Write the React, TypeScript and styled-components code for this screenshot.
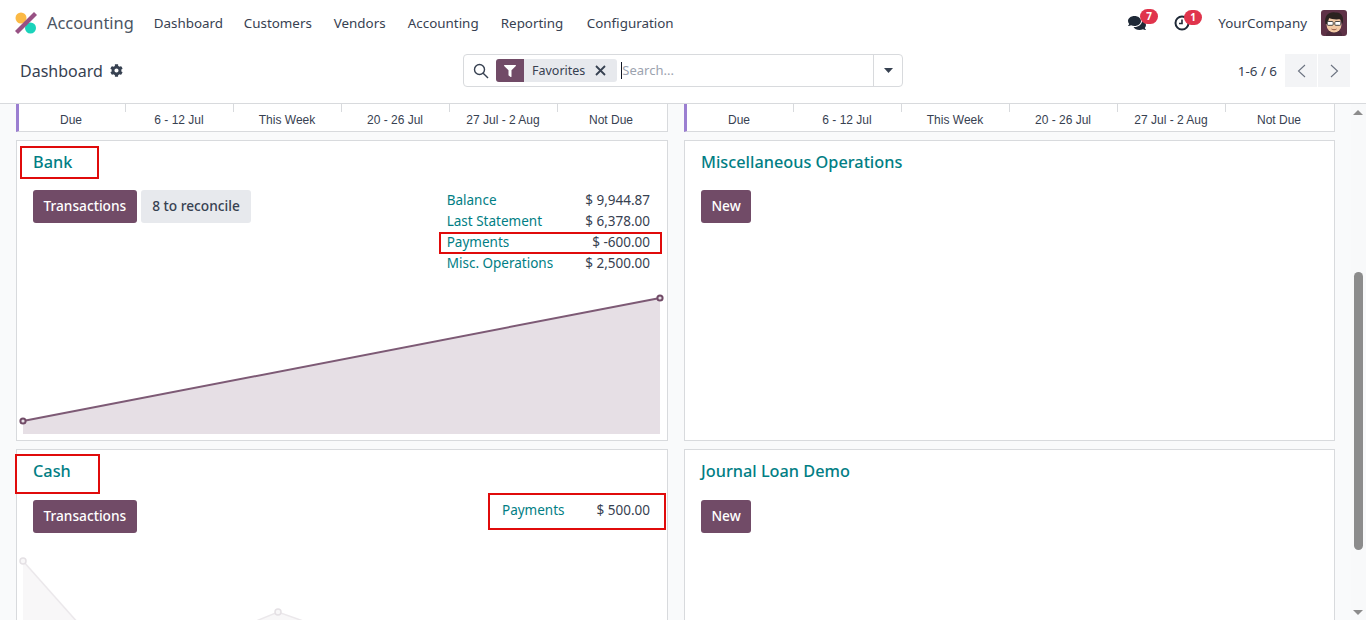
import React from 'react';
import styled, { createGlobalStyle } from 'styled-components';
import { FaCog, FaComments, FaFilter } from 'react-icons/fa';

const GlobalStyle = createGlobalStyle`
  html, body {
    margin: 0;
    height: 100%;
    overflow: hidden;
    background: #fff;
    font-family: "Noto Sans", "Open Sans", sans-serif;
    color: #374151;
  }
  * {
    box-sizing: border-box;
  }
`;

const Page = styled.div`
  display: flex;
  flex-direction: column;
  height: 620px;
  overflow: hidden;
`;

const NavBar = styled.header`
  display: flex;
  align-items: center;
  height: 46px;
  padding: 0 19px 0 15px;
  flex: none;
`;

const AppName = styled.span`
  font-size: 16.4px;
  margin: 0 20px 0 10px;
  padding-bottom: 2px;
  color: #4b5563;
`;

const MenuItem = styled.span<{ $width: number }>`
  width: ${p => p.$width}px;
  font-size: 13.4px;
`;

const NavRight = styled.div`
  display: flex;
  align-items: center;
  margin-left: auto;
`;

const Systray = styled.span<{ $mr: number }>`
  position: relative;
  display: flex;
  margin-right: ${p => p.$mr}px;
`;

const Badge = styled.span`
  position: absolute;
  top: -5px;
  right: -12px;
  width: 18px;
  height: 15px;
  border-radius: 8px;
  background: #e0344c;
  color: #fff;
  font-size: 10px;
  font-weight: 700;
  line-height: 15px;
  text-align: center;
`;

const CompanyName = styled.span`
  font-size: 13.4px;
  margin-right: 14px;
`;

const ControlPanel = styled.div`
  display: grid;
  grid-template-columns: 443px 440px 1fr;
  align-items: center;
  height: 58px;
  padding: 0 16px 8px 20px;
  border-bottom: 1px solid #d8dadd;
  flex: none;
`;

const PageTitle = styled.div`
  display: flex;
  align-items: center;
  gap: 7px;
  font-size: 16px;
`;

const SearchBox = styled.div`
  display: flex;
  align-items: center;
  height: 33px;
  border: 1px solid #d8dadd;
  border-radius: 4px;
  padding-left: 9px;
`;

const Facet = styled.div`
  display: flex;
  align-items: stretch;
  height: 23px;
  margin-left: 7px;
  border-radius: 3px;
  background: #e7e9ed;
  font-size: 12.5px;
`;

const FacetIcon = styled.span`
  display: flex;
  align-items: center;
  justify-content: center;
  width: 28px;
  background: #714b67;
  border-radius: 3px 0 0 3px;
`;

const FacetLabel = styled.span`
  display: flex;
  align-items: center;
  gap: 10px;
  padding: 0 11px 0 8px;
`;

const SearchInput = styled.span`
  flex: 1;
  height: 17px;
  margin-left: 4px;
  border-left: 1px solid #111827;
  color: #9ca3af;
  font-size: 13px;
  line-height: 16px;
`;

const SearchCaret = styled.span`
  display: flex;
  align-items: center;
  justify-content: center;
  width: 29px;
  height: 100%;
  border-left: 1px solid #d8dadd;
`;

const Pager = styled.div`
  display: flex;
  align-items: center;
  justify-content: flex-end;
  gap: 8px;
  font-size: 13.4px;
`;

const PagerButtons = styled.div`
  display: flex;
  gap: 1px;
`;

const PagerButton = styled.span`
  display: flex;
  align-items: center;
  justify-content: center;
  width: 32px;
  height: 33px;
  background: #f3f4f6;
`;

const Body = styled.div`
  flex: 1;
  display: flex;
  min-height: 0;
  background: #f9fafb;
`;

const Board = styled.main`
  flex: 1;
  display: grid;
  grid-template-columns: 652px 651px;
  grid-auto-rows: min-content;
  column-gap: 16px;
  row-gap: 8px;
  padding-left: 16px;
  overflow: hidden;
`;

const GraphStub = styled.div`
  display: grid;
  grid-template-columns: repeat(6, 108px);
  height: 28px;
  background: #fff;
  border-left: 3px solid #9b7fd1;
  border-right: 1px solid #d8dadd;
  border-bottom: 1px solid #d8dadd;
`;

const StubColumn = styled.div<{ $tick: boolean }>`
  position: relative;
  padding: 9px 4px 0 0;
  font-family: "Liberation Sans", Arial, sans-serif;
  font-size: 12px;
  line-height: 14px;
  color: #374151;
  text-align: center;
  white-space: nowrap;
  &::before {
    content: '';
    display: ${p => (p.$tick ? 'block' : 'none')};
    position: absolute;
    left: -2px;
    top: 0;
    width: 1px;
    height: 8px;
    background: #d8dadd;
  }
`;

const Card = styled.section<{ $height: number }>`
  position: relative;
  display: flex;
  flex-direction: column;
  height: ${p => p.$height}px;
  background: #fff;
  border: 1px solid #d8dadd;
`;

const CardTitle = styled.h3<{ $height: number }>`
  margin: 0;
  padding: 9px 16px 0;
  height: ${p => p.$height}px;
  color: #017e84;
  font-size: 16.3px;
  font-weight: 500;
  line-height: 24px;
`;

const CardRow = styled.div`
  display: flex;
  justify-content: space-between;
  padding: 0 17px 0 16px;
`;

const ButtonGroup = styled.div`
  display: flex;
  gap: 4px;
`;

const Button = styled.span<{ $primary?: boolean }>`
  display: flex;
  align-items: center;
  height: 33px;
  padding: 0 ${p => (p.$primary ? '10.5px' : '11.5px')} 2px;
  border-radius: 3px;
  font-size: 13.7px;
  font-weight: 500;
  background: ${p => (p.$primary ? '#714b67' : '#e7e9ed')};
  color: ${p => (p.$primary ? '#fff' : '#374151')};
`;

const Stats = styled.div`
  display: grid;
  grid-template-columns: auto auto;
  grid-auto-rows: 21px;
  column-gap: 32px;
  align-items: center;
  margin-top: -1px;
  font-size: 13.5px;
`;

const StatLabel = styled.span`
  color: #017e84;
`;

const StatValue = styled.span`
  text-align: right;
`;

const Chart = styled.svg`
  display: block;
  flex: none;
`;

const Highlight = styled.span<{ $x: number; $y: number; $w: number; $h: number }>`
  position: absolute;
  left: ${p => p.$x}px;
  top: ${p => p.$y}px;
  width: ${p => p.$w}px;
  height: ${p => p.$h}px;
  border: 2px solid #e00b0b;
  pointer-events: none;
`;

const ScrollBar = styled.aside`
  display: flex;
  flex-direction: column;
  align-items: center;
  width: 15px;
  flex: none;
  padding: 6px 1px 5px 0;
  background: #f8f9fa;
`;

const ScrollThumb = styled.span`
  width: 9px;
  height: 278px;
  margin: 157px 0 auto;
  border-radius: 5px;
  background: #8c8c8c;
`;

const ArrowUp = styled.span`
  width: 0;
  height: 0;
  border-left: 5px solid transparent;
  border-right: 5px solid transparent;
  border-bottom: 5px solid #8c8c8c;
`;

const ArrowDown = styled(ArrowUp)`
  border-bottom: none;
  border-top: 5px solid #8c8c8c;
`;

const Logo = () => (
  <svg width="22" height="22" viewBox="0 0 22 22">
    <circle cx="6" cy="6" r="5.5" fill="#fbb945" />
    <circle cx="15.5" cy="16" r="5.5" fill="#1ad3bb" />
    <path d="M19 0 L22 3 L3 22 L0 19 Z" fill="#985184" />
  </svg>
);

const ClockIcon = () => (
  <svg width="16" height="16" viewBox="0 0 16 16" fill="none" stroke="#1f2937" strokeWidth="2">
    <circle cx="8" cy="8" r="6.5" />
    <path d="M8 4.5 V8.5 H5" strokeWidth="1.6" />
  </svg>
);

const Avatar = () => (
  <svg width="26" height="26" viewBox="0 0 26 26">
    <rect width="26" height="26" rx="3" fill="#5e3146" />
    <path d="M5 26 C5 21 9 20 13 20 C18 20 21 21 21 26 Z" fill="#4b2b3b" />
    <ellipse cx="13" cy="14.5" rx="7.5" ry="8" fill="#f2c9a4" />
    <path d="M4.5 14 C2.5 5 9 1.5 14 2.5 C20.5 1.5 23.5 7 21.5 14 L19.5 9 C15 10 10 9 8 8 L6.5 14 Z" fill="#2b2320" />
    <rect x="6.2" y="11.5" width="6" height="3.8" rx="1" fill="#fff" stroke="#333" strokeWidth=".9" />
    <rect x="13.8" y="11.5" width="6" height="3.8" rx="1" fill="#fff" stroke="#333" strokeWidth=".9" />
    <path d="M10.5 19 C12 20 14 20 15.5 19" stroke="#8a4b3b" strokeWidth=".9" fill="none" />
  </svg>
);

const columns = ['Due', '6 - 12 Jul', 'This Week', '20 - 26 Jul', '27 Jul - 2 Aug', 'Not Due'];
const menu: [string, number][] = [
  ['Dashboard', 90],
  ['Customers', 90],
  ['Vendors', 74],
  ['Accounting', 93],
  ['Reporting', 86],
  ['Configuration', 100],
];

const Stub = () => (
  <GraphStub>
    {columns.map((c, i) => (
      <StubColumn key={c} $tick={i > 0}>{c}</StubColumn>
    ))}
  </GraphStub>
);

export default function App() {
  return (
    <Page>
      <GlobalStyle />
      <NavBar>
        <Logo />
        <AppName>Accounting</AppName>
        {menu.map(([label, width]) => (
          <MenuItem key={label} $width={width}>{label}</MenuItem>
        ))}
        <NavRight>
          <Systray $mr={28}>
            <FaComments size={18} color="#1f2937" />
            <Badge>7</Badge>
          </Systray>
          <Systray $mr={28}>
            <ClockIcon />
            <Badge>1</Badge>
          </Systray>
          <CompanyName>YourCompany</CompanyName>
          <Avatar />
        </NavRight>
      </NavBar>
      <ControlPanel>
        <PageTitle>
          Dashboard
          <FaCog size={13} color="#374151" />
        </PageTitle>
        <SearchBox>
          <svg width="16" height="16" viewBox="0 0 16 16" fill="none" stroke="#374151" strokeWidth="1.4">
            <circle cx="6.5" cy="6.5" r="5" />
            <path d="M10.2 10.2 L15 15" />
          </svg>
          <Facet>
            <FacetIcon>
              <FaFilter size={12} color="#fff" />
            </FacetIcon>
            <FacetLabel>
              Favorites
              <svg width="11" height="11" viewBox="0 0 11 11" stroke="#374151" strokeWidth="1.8">
                <path d="M1 1 L10 10 M10 1 L1 10" />
              </svg>
            </FacetLabel>
          </Facet>
          <SearchInput>Search...</SearchInput>
          <SearchCaret>
            <svg width="9" height="5" viewBox="0 0 9 5" fill="#374151">
              <path d="M0 0 H9 L4.5 5 Z" />
            </svg>
          </SearchCaret>
        </SearchBox>
        <Pager>
          1-6 / 6
          <PagerButtons>
            <PagerButton>
              <svg width="9" height="14" viewBox="0 0 9 14" fill="none" stroke="#6b7280" strokeWidth="1.1">
                <path d="M8 1 L1.5 7 L8 13" />
              </svg>
            </PagerButton>
            <PagerButton>
              <svg width="9" height="14" viewBox="0 0 9 14" fill="none" stroke="#6b7280" strokeWidth="1.1">
                <path d="M1 1 L7.5 7 L1 13" />
              </svg>
            </PagerButton>
          </PagerButtons>
        </Pager>
      </ControlPanel>
      <Body>
        <Board>
          <Stub />
          <Stub />
          <Card $height={301}>
            <CardTitle $height={49}>Bank</CardTitle>
            <CardRow>
              <ButtonGroup>
                <Button $primary>Transactions</Button>
                <Button>8 to reconcile</Button>
              </ButtonGroup>
              <Stats>
                <StatLabel>Balance</StatLabel>
                <StatValue>$ 9,944.87</StatValue>
                <StatLabel>Last Statement</StatLabel>
                <StatValue>$ 6,378.00</StatValue>
                <StatLabel>Payments</StatLabel>
                <StatValue>$ -600.00</StatValue>
                <StatLabel>Misc. Operations</StatLabel>
                <StatValue>$ 2,500.00</StatValue>
              </Stats>
            </CardRow>
            <Chart width="650" height="167" viewBox="0 0 650 167">
              <polygon points="6,148 643,25 643,161 6,161" fill="#e6dfe5" />
              <line x1="6" y1="148" x2="643" y2="25" stroke="#7d5a75" strokeWidth="2" />
              <circle cx="6" cy="148" r="2.6" fill="#e6dfe5" stroke="#714b67" strokeWidth="2" />
              <circle cx="643" cy="25" r="2.6" fill="#e6dfe5" stroke="#714b67" strokeWidth="2" />
            </Chart>
            <Highlight $x={3} $y={5} $w={79} $h={33} />
            <Highlight $x={422} $y={91} $w={223} $h={22} />
          </Card>
          <Card $height={301}>
            <CardTitle $height={49}>Miscellaneous Operations</CardTitle>
            <CardRow>
              <ButtonGroup>
                <Button $primary>New</Button>
              </ButtonGroup>
            </CardRow>
          </Card>
          <Card $height={301}>
            <CardTitle $height={50}>Cash</CardTitle>
            <CardRow>
              <ButtonGroup>
                <Button $primary>Transactions</Button>
              </ButtonGroup>
              <Stats>
                <StatLabel>Payments</StatLabel>
                <StatValue>$ 500.00</StatValue>
              </Stats>
            </CardRow>
            <Chart width="650" height="100" viewBox="0 0 650 100">
              <polygon points="6,28 70,100 210,100 261,79 320,100 6,100" fill="#f8f7f8" />
              <polyline points="6,28 70,100" fill="none" stroke="#ebe8eb" strokeWidth="1.5" />
              <polyline points="210,100 261,79 320,100" fill="none" stroke="#ebe8eb" strokeWidth="1.5" />
              <circle cx="6" cy="28" r="3" fill="#f8f7f8" stroke="#e4e0e4" strokeWidth="1.5" />
              <circle cx="261" cy="79" r="3" fill="#f8f7f8" stroke="#e4e0e4" strokeWidth="1.5" />
            </Chart>
            <Highlight $x={-2} $y={4} $w={85} $h={40} />
            <Highlight $x={471} $y={43} $w={178} $h={37} />
          </Card>
          <Card $height={301}>
            <CardTitle $height={50}>Journal Loan Demo</CardTitle>
            <CardRow>
              <ButtonGroup>
                <Button $primary>New</Button>
              </ButtonGroup>
            </CardRow>
          </Card>
        </Board>
        <ScrollBar>
          <ArrowUp />
          <ScrollThumb />
          <ArrowDown />
        </ScrollBar>
      </Body>
    </Page>
  );
}
